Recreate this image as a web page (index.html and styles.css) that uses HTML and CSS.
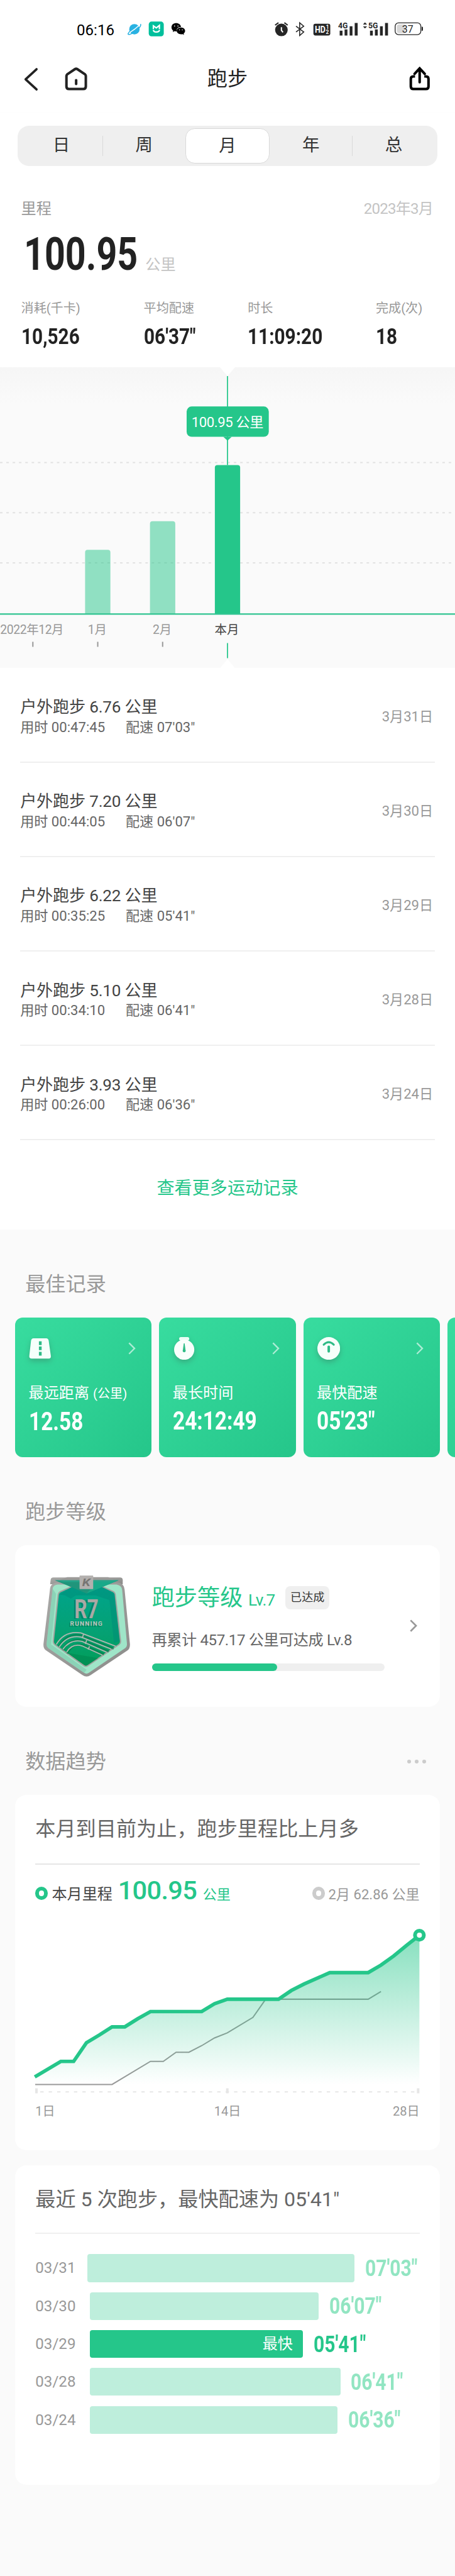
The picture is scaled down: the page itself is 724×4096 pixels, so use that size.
FILE: index.html
```html
<!DOCTYPE html>
<html lang="zh-CN">
<head>
    <meta charset="UTF-8">
    <meta name="viewport" content="width=device-width, initial-scale=1.0">
    <title>跑步</title>
    <link rel="stylesheet" href="styles.css">
</head>
<body>
    <div class="page">
        <div class="status-bar">
            <svg class="status-left" viewBox="0 0 870 180">
                <text x="36" y="129" font-size="108" textLength="268" lengthAdjust="spacingAndGlyphs">06:16</text>
                <circle cx="447" cy="87" r="37" fill="#29b2e2"/>
                <path d="M490 50C500 62 470 92 442 110C420 125 402 128 402 121C402 113 420 100 418 92" fill="none" stroke="#29b2e2" stroke-width="7"/>
                <path d="M414 110Q452 88 486 55" fill="none" stroke="#fff" stroke-width="6"/>
                <rect x="549" y="33" width="107" height="105" rx="20" fill="#00bf9c"/>
                <path d="M582 86V63L603 78L625 60V86M582 92Q584 107 603 107Q625 107 625 92" fill="none" stroke="#fff" stroke-width="10"/>
                <path d="M745 44C725 44 711 56 711 74C711 84 716 92 723 97L721 107L733 101C740 103 745 103 749 102C744 84 758 70 779 70C776 54 762 44 745 44Z"/>
                <path d="M778 75C795 75 808 85 808 99C808 107 804 113 798 118L800 127L790 122C766 127 748 115 748 99C748 85 761 75 778 75Z"/>
                <g fill="#fff">
                    <circle cx="733" cy="64" r="4"/><circle cx="757" cy="64" r="4"/>
                    <circle cx="768" cy="92" r="3.5"/><circle cx="788" cy="92" r="3.5"/>
                </g>
            </svg>
            <svg class="status-right" viewBox="0 0 1140 180">
                <g fill="#262626">
                    <circle cx="84" cy="92" r="45"/>
                    <path d="M84 73V95L95 109" fill="none" stroke="#fff" stroke-width="9"/>
                    <path d="M39 58L63 41M105 41L129 58" stroke="#262626" stroke-width="9"/>
                    <path d="M188 66L243 107L214 132V41L243 66L188 107" fill="none" stroke="#262626" stroke-width="7"/>
                    <rect x="312" y="48" width="120" height="84" rx="14"/>
                    <text x="322" y="113" font-size="65" font-weight="700" fill="#fff" textLength="76" lengthAdjust="spacingAndGlyphs">HD</text>
                    <text x="402" y="87" font-size="37" font-weight="700" fill="#fff">1</text>
                    <text x="400" y="122" font-size="37" font-weight="700" fill="#fff">2</text>
                    <text x="488" y="81" font-size="60" font-weight="700" textLength="69" lengthAdjust="spacingAndGlyphs">4G</text>
                    <path d="M499 97h20v35h-20zM534 88h20v44h-20zM570 66h20v66h-20zM606 42h21v90h-21z"/>
                    <path d="M665 54L679 38L694 54zM665 67h29L679 82z"/>
                    <text x="703" y="81" font-size="60" font-weight="700" textLength="69" lengthAdjust="spacingAndGlyphs">5G</text>
                    <path d="M715 97h20v35h-20zM750 88h20v44h-20zM786 66h20v66h-20zM822 42h21v90h-21z"/>
                    <rect x="894" y="42" width="183" height="84" rx="24" fill="none" stroke="#262626" stroke-width="6"/>
                    <path d="M925 53H965V115H925Q906 115 906 97V71Q906 53 925 53Z" fill="#d8d8d8"/>
                    <path d="M1083 69h3q6 0 6 6v18q0 6-6 6h-3z"/>
                    <text x="943" y="111" font-size="74" textLength="80" lengthAdjust="spacingAndGlyphs">37</text>
                </g>
            </svg>
        </div>

        <div class="nav">
            <svg class="nav-left" viewBox="0 0 160 60">
                <path d="M36 6L10 30L36 54" fill="none" stroke="#222" stroke-width="5.5" stroke-linecap="round" stroke-linejoin="round"/>
                <path d="M107 22Q107 20 109 18L127 6Q130 4 133 6L151 18Q153 20 153 22V47Q153 53 147 53H113Q107 53 107 47Z" fill="none" stroke="#222" stroke-width="6" stroke-linejoin="round"/>
                <path d="M130 32V41" stroke="#222" stroke-width="6" stroke-linecap="round"/>
            </svg>
            <div class="nav-title">跑步</div>
            <svg class="nav-share" viewBox="0 0 50 60">
                <path d="M14 23H10Q4 23 4 29V47Q4 53 10 53H40Q46 53 46 47V29Q46 23 40 23H36" fill="none" stroke="#000" stroke-width="6"/>
                <path d="M25 37V6M13 17L25 4L37 17" fill="none" stroke="#000" stroke-width="6" stroke-linecap="round"/>
            </svg>
        </div>

        <div class="tabs">
            <div class="tab">日</div>
            <i class="tab-line"></i>
            <div class="tab">周</div>
            <div class="tab active">月</div>
            <div class="tab">年</div>
            <i class="tab-line"></i>
            <div class="tab">总</div>
        </div>

        <div class="summary">
            <div class="summary-head">
                <span>里程</span>
                <span class="month">2023年3月</span>
            </div>
            <div class="total">
                <span class="total-num din">100.95</span>
                <span class="total-unit">公里</span>
            </div>
            <div class="stats">
                <div><p>消耗(千卡)</p><b class="din">10,526</b></div>
                <div><p>平均配速</p><b class="din">06'37"</b></div>
                <div><p>时长</p><b class="din">11:09:20</b></div>
                <div><p>完成(次)</p><b class="din">18</b></div>
            </div>
        </div>

        <svg class="month-chart" viewBox="0 0 1080 714">
            <defs>
                <linearGradient id="chartBg" x1="0" y1="0" x2="0" y2="1">
                    <stop offset="0" stop-color="#f6f6f6"/>
                    <stop offset="0.12" stop-color="#fafafa"/>
                </linearGradient>
            </defs>
            <rect width="1080" height="714" fill="url(#chartBg)"/>
            <path d="M522 0H558L540 21ZM522 714H558L540 692Z" fill="#fff"/>
            <path d="M0 226H1080M0 345H1080M0 464H1080" stroke="#e2e2e2" stroke-width="3" stroke-dasharray="6 9"/>
            <path d="M202 585V439Q202 433 208 433H256Q262 433 262 439V585ZM356 585V371Q356 365 362 365H410Q416 365 416 371V585Z" fill="#25c68a" fill-opacity="0.5"/>
            <path d="M510 585V238Q510 232 516 232H564Q570 232 570 238V585Z" fill="#25c68a"/>
            <path d="M0 585.3H1080" stroke="#30c491" stroke-width="3.4"/>
            <path d="M540 21V232M540 654V690" stroke="#25c68a" stroke-width="2.6"/>
            <rect x="443" y="93" width="195" height="72" rx="12" fill="#25c68a"/>
            <path d="M530 165H550L540 174Z" fill="#25c68a"/>
            <text x="540" y="142" text-anchor="middle" font-size="33" fill="#fff" textLength="171">100.95 公里</text>
            <g font-size="29" fill="#999" text-anchor="middle">
                <text x="76" y="632" textLength="151">2022年12月</text>
                <text x="231" y="632">1月</text>
                <text x="385" y="632">2月</text>
                <text x="538.5" y="632" fill="#444">本月</text>
            </g>
            <path d="M78 651V663M232 651V663M386 651V663" stroke="#999" stroke-width="3"/>
        </svg>

        <div class="runs">
            <div class="run">
                <div>
                    <div class="run-title">户外跑步 6.76 公里</div>
                    <div class="run-info"><span>用时 00:47:45</span><span>配速 07′03″</span></div>
                </div>
                <div class="run-date">3月31日</div>
            </div>
            <div class="run">
                <div>
                    <div class="run-title">户外跑步 7.20 公里</div>
                    <div class="run-info"><span>用时 00:44:05</span><span>配速 06′07″</span></div>
                </div>
                <div class="run-date">3月30日</div>
            </div>
            <div class="run">
                <div>
                    <div class="run-title">户外跑步 6.22 公里</div>
                    <div class="run-info"><span>用时 00:35:25</span><span>配速 05′41″</span></div>
                </div>
                <div class="run-date">3月29日</div>
            </div>
            <div class="run">
                <div>
                    <div class="run-title">户外跑步 5.10 公里</div>
                    <div class="run-info"><span>用时 00:34:10</span><span>配速 06′41″</span></div>
                </div>
                <div class="run-date">3月28日</div>
            </div>
            <div class="run">
                <div>
                    <div class="run-title">户外跑步 3.93 公里</div>
                    <div class="run-info"><span>用时 00:26:00</span><span>配速 06′36″</span></div>
                </div>
                <div class="run-date">3月24日</div>
            </div>
            <div class="more">查看更多运动记录</div>
        </div>

        <div class="section-title">最佳记录</div>
        <div class="records">
            <div class="record">
                <div class="record-top">
                    <svg class="record-icon" viewBox="0 0 54 54">
                        <path d="M11 3H41Q46 3 47 9L52 44Q53 51 47 51H7Q0 51 1 44L5 9Q6 3 11 3Z" fill="#f6fffb"/>
                        <path d="M27 10V19M27 22.500V31M27 35V44" stroke="#2ebb86" stroke-width="6.500"/>
                    </svg>
                    <svg class="arrow" viewBox="0 0 18 30"><path d="M2 2L15 15L2 28"/></svg>
                </div>
                <div class="record-name">最远距离 <small>(公里)</small></div>
                <b class="record-num din">12.58</b>
            </div>
            <div class="record">
                <div class="record-top">
                    <svg class="record-icon" viewBox="0 0 54 54">
                        <rect x="15" y="0" width="24" height="8" rx="4" fill="#ebfdf5"/>
                        <rect x="18" y="4" width="18" height="8" fill="#ebfdf5"/>
                        <circle cx="27" cy="30" r="24" fill="#f8fffc"/>
                        <path d="M26 15H28L30 30Q32 36 27 36Q22 36 24 30Z" fill="#2ebb86"/>
                    </svg>
                    <svg class="arrow" viewBox="0 0 18 30"><path d="M2 2L15 15L2 28"/></svg>
                </div>
                <div class="record-name">最长时间</div>
                <b class="record-num din">24:12:49</b>
            </div>
            <div class="record">
                <div class="record-top">
                    <svg class="record-icon" viewBox="0 0 54 54">
                        <circle cx="27" cy="27" r="27" fill="#f6fffb"/>
                        <path d="M15 18Q27 6 39 18" fill="none" stroke="#2ebb86" stroke-width="4.500" stroke-linecap="round"/>
                        <path d="M27 23V34" stroke="#2ebb86" stroke-width="6" stroke-linecap="round"/>
                    </svg>
                    <svg class="arrow" viewBox="0 0 18 30"><path d="M2 2L15 15L2 28"/></svg>
                </div>
                <div class="record-name">最快配速</div>
                <b class="record-num din">05'23"</b>
            </div>
            <div class="record"></div>
        </div>

        <div class="section-title">跑步等级</div>
        <div class="card level">
            <svg class="badge" viewBox="130 110 615 718">
                <defs>
                    <linearGradient id="silver" x1="0" y1="0" x2="1" y2="1">
                        <stop offset="0" stop-color="#a9a9a7"/>
                        <stop offset="1" stop-color="#8b8b89"/>
                    </linearGradient>
                    <linearGradient id="green" x1="0" y1="0" x2="0" y2="1">
                        <stop offset="0" stop-color="#00a48c"/>
                        <stop offset="0.6" stop-color="#05a172"/>
                        <stop offset="1" stop-color="#009e58"/>
                    </linearGradient>
                </defs>
                <path d="M200 124H675Q693 124 694 142V172H178L182 140Q184 124 200 124Z" fill="url(#silver)"/>
                <path d="M225 160H660Q704 168 707 210L745 596Q747 628 728 642L466 818Q437 838 408 818L146 640Q128 626 131 594L178 200Q182 168 225 160Z" fill="url(#silver)"/>
                <path d="M230 175H650Q688 182 690 215L724 595Q725 616 712 626L452 802Q437 812 420 802L164 626Q151 614 153 594L196 205Q200 178 230 175Z" fill="#9fe5c8"/>
                <path d="M196 205L153 594Q151 614 164 626L420 802L437 780L185 600L220 240Z" fill="#6fb89d" opacity="0.4"/>
                <path d="M330 190H550L625 224Q638 230 640 246L678 575Q680 592 668 600L446 750Q432 760 418 750L210 600Q199 590 201 575L236 246Q238 232 250 226Z" fill="url(#green)" stroke="#a3a39f" stroke-width="9"/>
                <path d="M242 245L282 250L325 275L360 252H500L600 285L632 590L672 575L636 240L550 194H330Z" fill="#008a78" opacity="0.45"/>
                <path d="M300 660L480 690L520 698L446 746Q432 755 420 746Z" fill="#00844d" opacity="0.5"/>
                <path d="M300 122H590L640 145H240Z" fill="#9c9b99"/>
                <path d="M212 145H664L437 238Z" fill="#20957b"/>
                <path d="M437 238L664 145H482V190Z" fill="#18a989"/>
                <path d="M212 144H664L600 157H275Z" fill="#25a58a"/>
                <rect x="387" y="111" width="97" height="96" rx="3" fill="#b3b0ae"/>
                <text x="406" y="186" font-size="72" font-weight="700" font-style="italic" fill="#777573" textLength="58" lengthAdjust="spacingAndGlyphs">K</text>
                <g font-weight="700">
                    <text x="340" y="420" font-size="190" fill="#00795d" opacity="0.7" textLength="165" lengthAdjust="spacingAndGlyphs">R7</text>
                    <text x="350" y="412" font-size="190" fill="#aaa8a4" textLength="172" lengthAdjust="spacingAndGlyphs">R7</text>
                    <text x="312" y="477" font-size="44" fill="#00794f" opacity="0.7" textLength="228" lengthAdjust="spacing">RUNNING</text>
                    <text x="320" y="469" font-size="44" fill="#c3c3bf" textLength="228" lengthAdjust="spacing">RUNNING</text>
                </g>
                <g fill="none" stroke="#007a4a" stroke-width="14" opacity="0.6">
                    <path d="M240 615Q300 515 400 535L630 630M268 640Q320 550 410 570L596 650M300 665Q340 585 420 605L560 670"/>
                </g>
                <g fill="none" stroke="#b4b6b0" stroke-width="8">
                    <path d="M222 600Q280 500 396 518L644 613"/>
                    <path d="M243 618Q300 530 400 548L612 633"/>
                    <path d="M268 636Q320 560 405 578L580 655"/>
                    <path d="M296 655Q335 590 405 610L550 676"/>
                    <path d="M416 526L406 555M438 568L428 596M458 614L448 636"/>
                </g>
            </svg>
            <div class="level-body">
                <div class="level-title">跑步等级<small>Lv.7</small><span class="chip">已达成</span></div>
                <div class="level-text">再累计 457.17 公里可达成 Lv.8</div>
                <div class="progress"><div class="progress-in" style="width: 53.9%"></div></div>
            </div>
            <svg class="arrow gray" viewBox="0 0 18 30"><path d="M2 2L15 15L2 28"/></svg>
        </div>

        <div class="section-title">数据趋势
            <span class="dots"><i></i><i></i><i></i></span>
        </div>
        <div class="card trend">
            <div class="card-title">本月到目前为止，跑步里程比上月多</div>
            <div class="legend">
                <i class="ring"></i>
                <span class="legend-name">本月里程</span>
                <span class="legend-num">100.95</span>
                <span class="legend-unit">公里</span>
                <i class="ring ring-gray"></i>
                <span class="legend-last">2月 62.86 公里</span>
            </div>
            <svg class="trend-chart" viewBox="0 0 912 410">
                <defs>
                    <linearGradient id="area" x1="0" y1="0" x2="0" y2="1">
                        <stop offset="0" stop-color="#25c68a" stop-opacity="0.55"/>
                        <stop offset="1" stop-color="#25c68a" stop-opacity="0"/>
                    </linearGradient>
                </defs>
                <path d="M0 384H182.400L273.600 329.300H304L334.400 307.500H364.800L395.200 292L425.600 273.700L456 261.600L516.800 224.900L547.200 181.800H790.400L820.800 163.400" fill="none" stroke="#999" stroke-width="3"/>
                <path d="M0 365.500L60.800 329.300H91.200L121.600 285.100L152 266.800L182.400 247.300H212.800L243.200 228.300L273.600 211.100H395.200L425.600 192.700L456 181.800H577.600L608 161.200L638.400 145.700L699.200 118.700H790.400L820.800 100.900L851.200 79.100L881.600 54L912 30.300V384H0Z" fill="url(#area)"/>
                <path d="M-1 366.100L60.800 329.300H91.200L121.600 285.100L152 266.800L182.400 247.300H212.800L243.200 228.300L273.600 211.100H395.200L425.600 192.700L456 181.800H577.600L608 161.200L638.400 145.700L699.200 118.700H790.400L820.800 100.900L851.200 79.100L881.600 54L912 30.300" fill="none" stroke="#25c68a" stroke-width="8.500"/>
                <circle cx="912" cy="30" r="10.500" fill="#fff" stroke="#25c68a" stroke-width="9"/>
                <path d="M12 401.700H904" stroke="#e6e6e6" stroke-width="3" stroke-dasharray="8 12"/>
                <path d="M3 393V405M456 393V405M909 393V405" stroke="#e6e6e6" stroke-width="6"/>
            </svg>
            <div class="trend-days"><span>1日</span><span>14日</span><span>28日</span></div>
        </div>

        <div class="card pace">
            <div class="card-title">最近 5 次跑步，最快配速为 05′41″</div>
            <div class="pace-list">
                <div class="pace-row"><span class="pace-date short">03/31</span><div class="pace-bar" style="width: 6.34rem"></div><b class="din">07'03"</b></div>
                <div class="pace-row"><span class="pace-date">03/30</span><div class="pace-bar" style="width: 5.43rem"></div><b class="din">06'07"</b></div>
                <div class="pace-row best"><span class="pace-date">03/29</span><div class="pace-bar" style="width: 5.06rem">最快</div><b class="din">05'41"</b></div>
                <div class="pace-row"><span class="pace-date">03/28</span><div class="pace-bar" style="width: 5.95rem"></div><b class="din">06'41"</b></div>
                <div class="pace-row"><span class="pace-date">03/24</span><div class="pace-bar" style="width: 5.88rem"></div><b class="din">06'36"</b></div>
            </div>
        </div>
    </div>
</body>
</html>
```
FILE: styles.css
```css
/* design width 1080, 1rem = 100 design px */
html {
    font-size: calc(100vw / 10.8);
}
body {
    font-family: Roboto, "Noto Sans CJK SC", sans-serif;
    font-weight: 400;
    background-color: #fafafa;
    margin: 0;
    padding: 0;
}
p {
    margin: 0;
}
svg {
    display: block;
}
.page {
    height: 61.1rem;
    overflow: hidden;
    font-size: 0.36rem;
}
.din {
    display: inline-block;
    font-weight: 700;
    white-space: nowrap;
    transform: scaleX(0.83);
    transform-origin: left center;
}

/* top */
.status-bar {
    display: flex;
    height: 0.7rem;
    padding: 0.4rem 0.6rem 0 1.7rem;
    justify-content: space-between;
    background-color: #fff;
}
.status-left {
    width: 2.9rem;
    height: 0.6rem;
}
.status-right {
    width: 3.8rem;
    height: 0.6rem;
}
.nav {
    display: flex;
    align-items: center;
    justify-content: space-between;
    height: 1.56rem;
    padding: 0 0.59rem 0 0.5rem;
    background-color: #fff;
}
.nav-left {
    width: 1.6rem;
    height: 0.6rem;
}
.nav-title {
    font-size: 0.48rem;
    line-height: 1.3;
    color: #222;
    padding-right: 1.01rem;
}
.nav-share {
    width: 0.5rem;
    height: 0.6rem;
}
.tabs {
    display: flex;
    align-items: center;
    height: 0.96rem;
    box-sizing: border-box;
    margin: 0.32rem 0.42rem 0;
    padding: 0 0.06rem;
    border-radius: 0.27rem;
    background-color: #efefef;
    /* white behind the rounded bar */
    box-shadow: 0 0 0 2rem #fff;
    clip-path: inset(-0.32rem -0.42rem 0 -0.42rem);
}
.tab {
    flex: 1;
    text-align: center;
    font-size: 0.41rem;
    line-height: 1.3;
    color: #333;
}
.tab.active {
    flex: 0 0 2.01rem;
    height: 0.84rem;
    line-height: 0.82rem;
    box-sizing: border-box;
    border: 1px solid #d9d9d9;
    border-radius: 0.22rem;
    background-color: #fff;
}
.tab-line {
    width: 1px;
    height: 0.48rem;
    background-color: #d9d9d9;
}

/* summary */
.summary {
    height: 4.77rem;
    box-sizing: border-box;
    padding: 0.78rem 0.5rem 0;
    background-color: #fff;
}
.summary-head {
    display: flex;
    justify-content: space-between;
    line-height: 0.48rem;
    color: #999;
}
.month {
    color: #c4c4c4;
    letter-spacing: -0.012rem;
    margin-right: 0.02rem;
}
.total {
    display: flex;
    align-items: baseline;
    height: 1rem;
    margin-top: 0.33rem;
    line-height: 1rem;
}
.total-num {
    width: 2.9rem;
    font-size: 1.07rem;
    color: #222;
    transform: scaleX(0.8);
    margin-left: 0.06rem;
}
.total-unit {
    color: #c4c4c4;
    margin-left: -0.01rem;
}
.stats {
    display: grid;
    grid-template-columns: 2.91rem 2.47rem 3.04rem auto;
    margin-top: 0.59rem;
}
.stats p {
    font-size: 0.3rem;
    line-height: 0.4rem;
    color: #999;
}
.stats b {
    font-size: 0.535rem;
    line-height: 0.6rem;
    margin-top: 0.17rem;
    color: #222;
}
.month-chart {
    width: 10.8rem;
    height: 7.14rem;
}

/* run list */
.runs {
    height: 13.32rem;
    padding: 0 0.48rem;
    background-color: #fff;
}
.run {
    display: flex;
    align-items: center;
    justify-content: space-between;
    height: 2.24rem;
    box-sizing: border-box;
    border-bottom: 0.03rem solid #efefef;
}
.run-title {
    font-size: 0.39rem;
    line-height: 0.5rem;
    color: #444;
    letter-spacing: -0.003rem;
    padding-top: 0.09rem;
}
.run-info {
    font-size: 0.33rem;
    line-height: 0.44rem;
    color: #666;
}
.run-info span {
    margin-right: 0.49rem;
}
.run-date {
    font-size: 0.33rem;
    color: #999;
    margin-right: 0.04rem;
}
.more {
    margin-top: 0.78rem;
    line-height: 0.72rem;
    font-size: 0.42rem;
    text-align: center;
    color: #25c68a;
}

.section-title {
    display: flex;
    justify-content: space-between;
    align-items: center;
    padding: 1.06rem 0.68rem 0.55rem 0.6rem;
    font-size: 0.48rem;
    line-height: 0.48rem;
    height: 0.48rem;
    color: #999;
}

/* best records */
.records {
    display: flex;
    gap: 0.18rem;
    margin-left: 0.36rem;
}
.record {
    flex: 0 0 3.24rem;
    height: 3.3rem;
    box-sizing: border-box;
    padding: 0.45rem 0.32rem 0;
    border-radius: 0.18rem;
    background: linear-gradient(135deg, #38dc9f, #25c68a);
    color: #fff;
}
.record-top {
    display: flex;
    justify-content: space-between;
    align-items: center;
    height: 0.54rem;
    padding: 0 0.06rem 0 0.01rem;
}
.record-icon {
    width: 0.54rem;
    height: 0.54rem;
    filter: drop-shadow(0 0.06rem 0.06rem rgba(60, 110, 90, 0.4));
}
.arrow {
    width: 0.18rem;
    height: 0.3rem;
    fill: none;
    stroke: #fff;
    stroke-width: 3.5;
    opacity: 0.6;
}
.arrow.gray {
    stroke: #999;
    stroke-width: 4;
    opacity: 1;
}
.record-name {
    margin-top: 0.56rem;
    line-height: 0.48rem;
    white-space: nowrap;
}
.record-name small {
    font-size: 0.3rem;
}
.record-num {
    margin-top: 0.12rem;
    font-size: 0.6rem;
    line-height: 0.6rem;
}

/* cards */
.card {
    margin: 0 0.36rem;
    box-sizing: border-box;
    border-radius: 0.27rem;
    background-color: #fff;
}
.level {
    display: flex;
    align-items: flex-start;
    height: 3.84rem;
    padding: 0.72rem 0.53rem 0 0.67rem;
}
.badge {
    width: 2.055rem;
    height: 2.4rem;
}
.level-body {
    width: 5.52rem;
    margin-left: 0.52rem;
}
.level-title {
    display: flex;
    align-items: baseline;
    margin-top: 0.18rem;
    font-size: 0.54rem;
    line-height: 0.72rem;
    color: #25c68a;
    white-space: nowrap;
}
.level-title small {
    font-size: 0.39rem;
    margin-left: 0.13rem;
    letter-spacing: -0.01rem;
}
.chip {
    align-self: center;
    width: 1.04rem;
    height: 0.55rem;
    line-height: 0.55rem;
    margin-left: 0.25rem;
    margin-top: -0.06rem;
    border-radius: 0.12rem;
    background-color: #efefef;
    font-size: 0.27rem;
    text-align: center;
    color: #333;
}
.level-text {
    margin-top: 0.35rem;
    line-height: 0.48rem;
    color: #666;
    white-space: nowrap;
    letter-spacing: -0.006rem;
}
.progress {
    height: 0.18rem;
    margin-top: 0.31rem;
    border-radius: 0.09rem;
    background-color: #efefef;
}
.progress-in {
    height: 100%;
    border-radius: 0.09rem;
    background-color: #25c68a;
}
.level .arrow {
    margin: 1.05rem 0 0 auto;
}
.dots {
    display: flex;
    gap: 0.09rem;
}
.dots i {
    width: 0.09rem;
    height: 0.09rem;
    border-radius: 50%;
    background-color: #ccc;
}
.card-title {
    height: 1.65rem;
    line-height: 1.63rem;
    box-sizing: border-box;
    border-bottom: 0.03rem solid #e6e6e6;
    font-size: 0.48rem;
    color: #666;
    white-space: nowrap;
}
.trend {
    height: 8.42rem;
    padding: 0 0.48rem;
}
.legend {
    display: flex;
    align-items: baseline;
    height: 1.37rem;
    line-height: 1.21rem;
    white-space: nowrap;
}
.ring {
    align-self: flex-start;
    width: 0.3rem;
    height: 0.3rem;
    margin-top: 0.53rem;
    box-sizing: border-box;
    border: 0.09rem solid #25c68a;
    border-radius: 50%;
}
.ring-gray {
    border-color: #ccc;
    margin-left: auto;
}
.legend-name {
    margin-left: 0.09rem;
    color: #444;
}
.legend-num {
    margin-left: 0.13rem;
    font-size: 0.62rem;
    font-weight: 500;
    color: #25c68a;
    letter-spacing: -0.01rem;
}
.legend-unit {
    margin-left: 0.14rem;
    font-size: 0.33rem;
    color: #25c68a;
}
.legend-last {
    margin-left: 0.08rem;
    font-size: 0.33rem;
    color: #999;
}
.trend-chart {
    width: 9.12rem;
    height: 4.1rem;
    overflow: visible;
}
.trend-days {
    display: flex;
    margin-top: 0.18rem;
    font-size: 0.3rem;
    line-height: 0.4rem;
    color: #999;
}
.trend-days span {
    flex: 1;
    text-align: center;
}
.trend-days span:first-child {
    text-align: left;
}
.trend-days span:last-child {
    text-align: right;
}

/* pace of last 5 runs */
.pace {
    height: 7.58rem;
    margin-top: 0.36rem;
    padding: 0 0.48rem;
}
.pace .card-title {
    height: 1.63rem;
    border-color: #efefef;
}
.pace-list {
    display: flex;
    flex-direction: column;
    gap: 0.24rem;
    margin-top: 0.48rem;
}
.pace-row {
    display: flex;
    align-items: center;
    height: 0.66rem;
}
.pace-date {
    width: 1.29rem;
    color: #999;
}
.pace-date.short {
    width: 1.23rem;
}
.pace-bar {
    height: 0.66rem;
    line-height: 0.66rem;
    box-sizing: border-box;
    padding-right: 0.24rem;
    border-radius: 0.06rem;
    background-color: #beeedc;
    text-align: right;
    color: #fff;
}
.pace-row b {
    width: 1.3rem;
    margin-left: 0.25rem;
    font-size: 0.54rem;
    color: #92e5c2;
}
.pace-row.best .pace-bar {
    background-color: #25c68a;
}
.pace-row.best b {
    color: #25c68a;
}
```
